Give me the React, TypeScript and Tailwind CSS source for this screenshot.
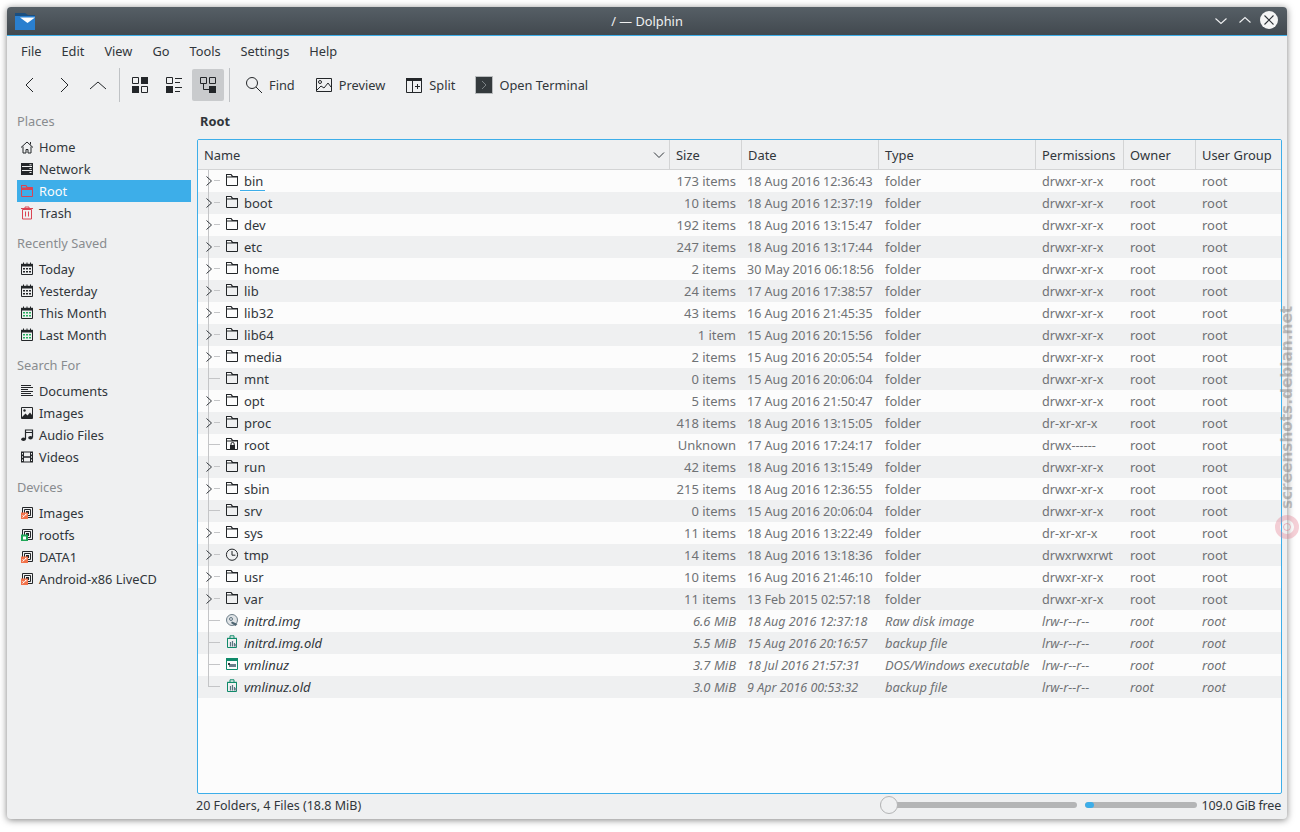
import React from "react";

const D = "#232629";

const Svg = ({ children, className = "", size = 16 }: { children: React.ReactNode; className?: string; size?: number }) => (
  <svg width={size} height={size} viewBox="0 0 16 16" fill="none" className={`shrink-0 ${className}`}>{children}</svg>
);

const Folder = () => (
  <Svg>
    <path d="M2.5 3.5h11v9h-11z" stroke={D} />
    <path d="M2 1h5.4l1.6 2H14v1.4H2z" fill={D} />
    <path d="M3 2h3.8l.9 1.4H3z" fill="#fcfcfc" />
  </Svg>
);
const LockFolder = () => (
  <Svg>
    <path d="M2.5 3.5h11v9h-11z" stroke={D} />
    <path d="M2 1h5.4l1.6 2H14v1.4H2z" fill={D} />
    <path d="M3 2h3.8l.9 1.4H3z" fill="#fcfcfc" />
    <path d="M7 8.5V7a1.6 1.6 0 0 1 3.2 0v1.5" stroke={D} />
    <rect x="6" y="8" width="5" height="4.5" fill={D} />
  </Svg>
);
const Clock = () => (
  <Svg>
    <circle cx="8" cy="7.7" r="5.6" stroke={D} />
    <path d="M8 4V8.2h3.4" stroke={D} />
  </Svg>
);
const DiskImg = () => (
  <Svg>
    <circle cx="8" cy="7" r="5.5" fill="#dfe3e6" stroke="#6e7f8a" />
    <circle cx="7" cy="6" r="1.5" stroke="#5f7480" />
    <path d="M8 8.5l5.5 2.5-2 2-4.5-3z" fill="#4d6470" />
  </Svg>
);
const Backup = () => (
  <Svg>
    <path d="M3.5 3.5h9v9h-9z" stroke="#0f8a6a" />
    <path d="M6 3V.8h4V3" stroke="#0f8a6a" />
    <path d="M3 2.8h10v1H3z" fill="#0f8a6a" />
    <path d="M6.5 7v4.5M8.5 6v5.5M10.5 8v3.5M12 9v2.5" stroke="#5a7480" strokeWidth="1.2" />
  </Svg>
);
const Exec = () => (
  <Svg>
    <path d="M2.5 1.5h11v11h-11z" stroke="#0f8a6a" />
    <path d="M2 1h12v3H2z" fill="#0f8a6a" />
    <path d="M5 7h7v3H5z" fill="#6a7f8a" />
    <path d="M4 6h2v2H4z" fill="#31363b" />
  </Svg>
);
const Home = () => (
  <Svg>
    <path d="M2 8.5 8 3l6 5.5" stroke={D} />
    <path d="M4 7.5V14h3v-3.5h2V14h3V7.5" stroke={D} />
    <path d="M11.5 3v2.5" stroke={D} />
  </Svg>
);
const Network = () => (
  <Svg>
    <path d="M2 2h12v12H2z" fill={D} />
    <path d="M3 5.5h10M3 9.5h10" stroke="#eff0f1" />
    <path d="M10.5 3.8h2M10.5 7.5h2M10.5 11.5h2" stroke="#eff0f1" />
  </Svg>
);
const RootF = () => (
  <Svg>
    <path d="M2.5 4.5h11v9h-11z" stroke="#da4453" />
    <path d="M2 2h5.2l1.6 2.5H14V7H2z" fill="#da4453" />
    <path d="M3 3h3.6l1 1.5H3z" fill="#3daee9" />
  </Svg>
);
const Trash = () => (
  <Svg>
    <path d="M3.5 4.5h9v9.5h-9z" stroke="#da4453" />
    <path d="M2 3.5h12M6 3.5V2h4v1.5M6.5 6.5v5M9.5 6.5v5" stroke="#da4453" />
  </Svg>
);
const Cal = ({ green }: { green?: boolean }) => (
  <Svg>
    <path d="M2.5 4.5h11v9h-11z" stroke={D} />
    <path d="M2 2.8h12v2.7H2z" fill={D} />
    <path d="M4.5 1.5v2M8 1.5v2M11.5 1.5v2" stroke={D} />
    <path d="M4 7h2v1.5H4zM7 7h2v1.5H7zM10 7h2v1.5h-2zM4 10h2v1.5H4zM7 10h2v1.5H7zM10 10h2v1.5h-2z" fill={green ? "#27ae60" : D} />
  </Svg>
);
const Doc = () => (
  <Svg>
    <path d="M2 2.5h10M2 4.5h12M2 6.5h7M2 8.5h12M2 10.5h10M2 12.5h12" stroke={D} />
  </Svg>
);
const Img = () => (
  <Svg>
    <path d="M2.5 2.5h11v11h-11z" stroke={D} />
    <circle cx="5.5" cy="5.5" r="1.2" fill={D} />
    <path d="M3 12l3.5-3.5 2 2L11 7.5l2 2.5v3H3z" fill={D} />
  </Svg>
);
const Audio = () => (
  <Svg>
    <path d="M6.5 12V3h7v7.5M6.5 5.5h7" stroke={D} strokeWidth="1.2" />
    <ellipse cx="4.5" cy="12.3" rx="2.3" ry="1.7" fill={D} />
    <ellipse cx="11.5" cy="10.7" rx="2.3" ry="1.7" fill={D} />
  </Svg>
);
const Video = () => (
  <Svg>
    <path d="M2 2.5h12v11H2z" fill={D} />
    <path d="M5 3.5h6v3.8H5zM5 8.7h6v3.8H5z" fill="#eff0f1" />
    <path d="M3 4h1v1.5H3zM3 7.2h1v1.5H3zM3 10.5h1V12H3zM12 4h1v1.5h-1zM12 7.2h1v1.5h-1zM12 10.5h1V12h-1z" fill="#eff0f1" />
  </Svg>
);
const Drive = ({ green }: { green?: boolean }) => (
  <Svg>
    <path d="M3.5 2.5h10v10h-10z" stroke={D} />
    <path d="M5.5 4.5h6v6h-6z" stroke={D} />
    <path d="M7 6h3v3H7z" fill={D} />
    <path d="M2 7.5h7V14H2z" fill={green ? "#1ea656" : "#f2724a"} />
    {green ? <path d="M4 9.5h3v3H4z" fill="#fff" /> : <path d="M3.5 12.5l4-3.5M3.5 10.5l1.5 1M6 9l1.5 1" stroke="#fff" />}
  </Svg>
);

const ToolIcon = ({ children, active }: { children: React.ReactNode; active?: boolean }) => (
  <div className={`w-8 h-8 flex items-center justify-center rounded-[2px] ${active ? "bg-[#c9cbcd]" : ""}`}>{children}</div>
);

const TextTool = ({ icon, label }: { icon: React.ReactNode; label: string }) => (
  <div className="h-8 px-2 flex items-center gap-[6px]">
    {icon}
    <span className="pt-[2px]">{label}</span>
  </div>
);

const ToolSvg = ({ children }: { children: React.ReactNode }) => (
  <svg width="18" height="18" viewBox="0 0 18 18" fill="none" className="shrink-0">{children}</svg>
);

const places: [string, { label: string; icon: React.ReactNode; active?: boolean }[]][] = [
  ["Places", [
    { label: "Home", icon: <Home /> },
    { label: "Network", icon: <Network /> },
    { label: "Root", icon: <RootF />, active: true },
    { label: "Trash", icon: <Trash /> },
  ]],
  ["Recently Saved", [
    { label: "Today", icon: <Cal /> },
    { label: "Yesterday", icon: <Cal /> },
    { label: "This Month", icon: <Cal green /> },
    { label: "Last Month", icon: <Cal green /> },
  ]],
  ["Search For", [
    { label: "Documents", icon: <Doc /> },
    { label: "Images", icon: <Img /> },
    { label: "Audio Files", icon: <Audio /> },
    { label: "Videos", icon: <Video /> },
  ]],
  ["Devices", [
    { label: "Images", icon: <Drive /> },
    { label: "rootfs", icon: <Drive green /> },
    { label: "DATA1", icon: <Drive /> },
    { label: "Android-x86 LiveCD", icon: <Drive /> },
  ]],
];

type Row = [string, string, string, string, string, boolean, ("f" | "l" | "c" | "d" | "b" | "e")];
const rows: Row[] = [
  ["bin", "173 items", "18 Aug 2016 12:36:43", "folder", "drwxr-xr-x", true, "f"],
  ["boot", "10 items", "18 Aug 2016 12:37:19", "folder", "drwxr-xr-x", true, "f"],
  ["dev", "192 items", "18 Aug 2016 13:15:47", "folder", "drwxr-xr-x", true, "f"],
  ["etc", "247 items", "18 Aug 2016 13:17:44", "folder", "drwxr-xr-x", true, "f"],
  ["home", "2 items", "30 May 2016 06:18:56", "folder", "drwxr-xr-x", true, "f"],
  ["lib", "24 items", "17 Aug 2016 17:38:57", "folder", "drwxr-xr-x", true, "f"],
  ["lib32", "43 items", "16 Aug 2016 21:45:35", "folder", "drwxr-xr-x", true, "f"],
  ["lib64", "1 item", "15 Aug 2016 20:15:56", "folder", "drwxr-xr-x", true, "f"],
  ["media", "2 items", "15 Aug 2016 20:05:54", "folder", "drwxr-xr-x", true, "f"],
  ["mnt", "0 items", "15 Aug 2016 20:06:04", "folder", "drwxr-xr-x", false, "f"],
  ["opt", "5 items", "17 Aug 2016 21:50:47", "folder", "drwxr-xr-x", true, "f"],
  ["proc", "418 items", "18 Aug 2016 13:15:05", "folder", "dr-xr-xr-x", true, "f"],
  ["root", "Unknown", "17 Aug 2016 17:24:17", "folder", "drwx------", false, "l"],
  ["run", "42 items", "18 Aug 2016 13:15:49", "folder", "drwxr-xr-x", true, "f"],
  ["sbin", "215 items", "18 Aug 2016 12:36:55", "folder", "drwxr-xr-x", true, "f"],
  ["srv", "0 items", "15 Aug 2016 20:06:04", "folder", "drwxr-xr-x", false, "f"],
  ["sys", "11 items", "18 Aug 2016 13:22:49", "folder", "dr-xr-xr-x", true, "f"],
  ["tmp", "14 items", "18 Aug 2016 13:18:36", "folder", "drwxrwxrwt", true, "c"],
  ["usr", "10 items", "16 Aug 2016 21:46:10", "folder", "drwxr-xr-x", true, "f"],
  ["var", "11 items", "13 Feb 2015 02:57:18", "folder", "drwxr-xr-x", true, "f"],
  ["initrd.img", "6.6 MiB", "18 Aug 2016 12:37:18", "Raw disk image", "lrw-r--r--", false, "d"],
  ["initrd.img.old", "5.5 MiB", "15 Aug 2016 20:16:57", "backup file", "lrw-r--r--", false, "b"],
  ["vmlinuz", "3.7 MiB", "18 Jul 2016 21:57:31", "DOS/Windows executable", "lrw-r--r--", false, "e"],
  ["vmlinuz.old", "3.0 MiB", "9 Apr 2016 00:53:32", "backup file", "lrw-r--r--", false, "b"],
];

const rowIcon = (k: Row[6]) =>
  k === "f" ? <Folder /> : k === "l" ? <LockFolder /> : k === "c" ? <Clock /> : k === "d" ? <DiskImg /> : k === "b" ? <Backup /> : <Exec />;

const Tree = ({ expandable, last }: { expandable: boolean; last: boolean }) => (
  <svg width="26" height="22" viewBox="0 0 26 22" fill="none" className="shrink-0">
    <path d={last ? "M10.5 0v11" : "M10.5 0v22"} stroke="#c4c5c7" />
    {expandable ? (
      <>
        <path d="M16 10.5h6" stroke="#c4c5c7" />
        <path d="M8.5 6.5l5 4.5-5 4.5" stroke="#31363b" />
      </>
    ) : (
      <path d="M10.5 10.5h11.5" stroke="#c4c5c7" />
    )}
  </svg>
);

const headers: [string, string][] = [
  ["Size", "w-[72px]"],
  ["Date", "w-[137px]"],
  ["Type", "w-[157px]"],
  ["Permissions", "w-[88px]"],
  ["Owner", "w-[72px]"],
  ["User Group", "flex-1"],
];

const cell = "h-[22px] leading-[21px] pt-px whitespace-nowrap text-[#6f7275]";

export default function App() {
  return (
    <div className="relative w-[1300px] h-[832px] bg-white pl-[7px] pt-[7px] overflow-hidden text-[12.8px] text-[#31363b] font-['Noto_Sans',sans-serif]">
      <div className="w-[1280px] h-[812px] flex flex-col bg-[#eff0f1] rounded-[4px] shadow-[0_1px_7px_rgba(0,0,0,0.5)] overflow-hidden">
        {/* Title bar */}
        <div className="relative h-[29px] shrink-0 flex items-center justify-center bg-gradient-to-b from-[#565f66] to-[#42494f] border-b border-[#3daee9] text-[#eff0f1]">
          <span className="pt-[2px]">/ — Dolphin</span>
          <svg width="22" height="18" viewBox="0 0 22 18" className="absolute left-[7px] top-[5px]">
            <path d="M1 1h10l3 2h7v14a1 1 0 0 1-1 1H1z" fill="#1b4f80" />
            <path d="M1 4h20v14H1z" fill="#2a7fcf" />
            <path d="M6 5.5h15L13.5 11z" fill="#fff" />
          </svg>
          <svg width="16" height="16" viewBox="0 0 16 16" fill="none" className="absolute left-[1206px] top-[6px]"><path d="M2.5 5.5 8 10.5l5.5-5" stroke="#eff0f1" strokeWidth="1.1" /></svg>
          <svg width="16" height="16" viewBox="0 0 16 16" fill="none" className="absolute left-[1230px] top-[5px]"><path d="M2.5 10.5 8 5.5l5.5 5" stroke="#eff0f1" strokeWidth="1.1" /></svg>
          <div className="absolute left-[1253px] top-[4px] w-[18px] h-[18px] rounded-full bg-[#f5f5f5] flex items-center justify-center">
            <svg width="12" height="12" viewBox="0 0 12 12" fill="none"><path d="M1.5 1.5l9 9M10.5 1.5l-9 9" stroke="#31363b" strokeWidth="1.1" /></svg>
          </div>
        </div>

        {/* Menu */}
        <div className="h-[30px] shrink-0 flex items-center pl-[14px] pt-[1px] gap-[20px]">
          {["File", "Edit", "View", "Go", "Tools", "Settings", "Help"].map((m) => (
            <span key={m}>{m}</span>
          ))}
        </div>

        {/* Toolbar */}
        <div className="h-[38px] shrink-0 flex items-center pl-[7px] pb-[1px]">
          <div className="flex gap-[2px]">
            <ToolIcon><ToolSvg><path d="M12 2 5 9l7 7" stroke={D} /></ToolSvg></ToolIcon>
            <ToolIcon><ToolSvg><path d="M6 2l7 7-7 7" stroke={D} /></ToolSvg></ToolIcon>
            <ToolIcon><ToolSvg><path d="M1 13l8-7 8 7" stroke={D} /></ToolSvg></ToolIcon>
          </div>
          <div className="w-px h-[34px] bg-[#bfc2c5] ml-[5px] mr-[4px]" />
          <div className="flex gap-[2px]">
            <ToolIcon>
              <ToolSvg>
                <path d="M1.5 1.5h6v6h-6zM10.5 10.5h6v6h-6z" stroke={D} />
                <path d="M10 1h7v7h-7zM1 10h7v7H1z" fill={D} />
              </ToolSvg>
            </ToolIcon>
            <ToolIcon>
              <ToolSvg>
                <path d="M1.5 1.5h6v6h-6z" stroke={D} />
                <path d="M1 10h7v7H1z" fill={D} />
                <path d="M10 2.5h7M10 6.5h5M10 11.5h7M10 15.5h5" stroke={D} />
              </ToolSvg>
            </ToolIcon>
            <ToolIcon active>
              <ToolSvg>
                <path d="M1.5 1.5h6v6h-6zM10.5 1.5h6v6h-6z" stroke={D} />
                <path d="M10 10h7v7h-7z" fill={D} />
                <path d="M4.5 8v5.5H10" stroke={D} />
              </ToolSvg>
            </ToolIcon>
          </div>
          <div className="w-px h-[34px] bg-[#bfc2c5] ml-[5px] mr-[7px]" />
          <div className="flex gap-[4px]">
            <TextTool label="Find" icon={<ToolSvg><circle cx="7" cy="7" r="5.5" stroke={D} /><path d="M11 11l6 6" stroke={D} /></ToolSvg>} />
            <TextTool label="Preview" icon={<ToolSvg><path d="M1.5 2.5h15v13h-15z" stroke={D} /><circle cx="5" cy="6" r="1.5" stroke={D} /><path d="M2 14l4-4 3 2 4-5 3 4" stroke={D} /></ToolSvg>} />
            <TextTool label="Split" icon={<ToolSvg><path d="M1.5 2.5h15v14h-15z" stroke={D} /><path d="M1 2h16v3H1z" fill={D} /><path d="M7.5 5v11M10 10.5h5M12.5 8v5" stroke={D} /></ToolSvg>} />
            <TextTool label="Open Terminal" icon={<svg width="18" height="18" viewBox="0 0 18 18" fill="none" className="shrink-0"><rect x="0.5" y="0.5" width="17" height="17" fill="#343a3d" stroke="#b9bcbe" /><path d="M7 5l4 4-4 4" stroke="#7b8285" /></svg>} />
          </div>
        </div>

        {/* Body */}
        <div className="flex-1 min-h-0 flex">
          {/* Sidebar */}
          <div className="w-[190px] shrink-0 pl-[10px] pt-[6px]">
            {places.map(([title, items], i) => (
              <div key={title} className={i ? "mt-[8px]" : ""}>
                <div className="h-[22px] mb-[4px] flex items-center pt-[2px] text-[#898c8f]">{title}</div>
                {items.map((it) => (
                  <div key={it.label} className={`h-[22px] w-[174px] flex items-center pl-[2px] gap-[4px] ${it.active ? "bg-[#3daee9] text-[#fcfcfc]" : ""}`}>
                    {it.icon}
                    <span className="pt-[2px]">{it.label}</span>
                  </div>
                ))}
              </div>
            ))}
          </div>

          {/* Main */}
          <div className="flex-1 min-w-0 flex flex-col pt-[7px]">
            <div className="h-[22px] flex items-center pl-[3px] font-bold shrink-0">Root</div>
            <div className="h-[655px] w-[1085px] mt-[6px] shrink-0 border border-[#3daee9] rounded-[2px] bg-[#fcfcfc] overflow-hidden text-[13px]">
              <div className="h-[30px] flex items-center bg-[#eff0f1] border-b border-[#d3d4d5] text-[12.9px]">
                <div className="w-[472px] h-full flex items-center justify-between pl-[6px] pr-[4px] border-r border-[#d3d4d5]">
                  <span className="pt-[3px]">Name</span>
                  <svg width="12" height="12" viewBox="0 0 12 12" fill="none"><path d="M1 3.5 6 8.5l5-5" stroke="#31363b" /></svg>
                </div>
                {headers.map(([h, w]) => (
                  <div key={h} className={`${w} h-full flex items-center pl-[6px] ${h === "User Group" ? "" : "border-r border-[#d3d4d5]"}`}><span className="pt-[3px]">{h}</span></div>
                ))}
              </div>
              {rows.map((r, i) => {
                const link = i >= 20;
                return (
                  <div key={r[0]} className={`h-[22px] flex items-start ${i % 2 ? "bg-[#eff0f1]" : "bg-[#fcfcfc]"} ${link ? "italic" : ""}`}>
                    <div className="w-[472px] h-[22px] flex items-center">
                      <Tree expandable={r[5]} last={i === rows.length - 1} />
                      {rowIcon(r[6])}
                      <span className={`self-start h-[21px] pt-px px-1 leading-[21px] ${i === 0 ? "w-[25px] border-b border-[#3daee9]" : ""}`}>{r[0]}</span>
                    </div>
                    <div className={`w-[72px] text-right pr-[6px] ${cell}`}>{r[1]}</div>
                    <div className={`w-[137px] pl-[5px] text-[12.5px] ${cell}`}>{r[2]}</div>
                    <div className={`w-[157px] pl-[6px] text-[12.9px] ${cell}`}>{r[3]}</div>
                    <div className={`w-[88px] pl-[6px] text-[12.6px] ${cell}`}>{r[4]}</div>
                    <div className={`w-[72px] pl-[6px] ${cell}`}>root</div>
                    <div className={`flex-1 pl-[6px] ${cell}`}>root</div>
                  </div>
                );
              })}
            </div>
            <div className="flex-1 flex items-center w-[1085px] pr-[1px] pb-[3px] text-[12.5px]">
              <span className="-ml-[1px] pt-[2px]">20 Folders, 4 Files (18.8 MiB)</span>
              <div className="ml-auto relative w-[197px] h-[6px] rounded-full bg-[#b4b5b6]">
                <div className="absolute left-0 -top-[6px] w-[18px] h-[18px] rounded-full bg-[#eff0f1] border border-[#b4b5b6]" />
              </div>
              <div className="ml-[8px] w-[112px] h-[6px] rounded-full bg-[#b4b5b6] overflow-hidden">
                <div className="w-[9px] h-full rounded-full bg-[#3daee9]" />
              </div>
              <span className="ml-[5px] pt-[2px] tracking-[-0.2px]">109.0 GiB free</span>
            </div>
          </div>
        </div>
      </div>

      {/* Watermark */}
      <div className="absolute left-[1280px] top-[304px] w-[15px] h-[206px] flex items-center justify-center pointer-events-none">
        <span className="rotate-[-90deg] whitespace-nowrap font-['DejaVu_Sans',sans-serif] font-bold text-[15.3px] text-[rgba(130,130,130,0.5)]">screenshots.debian.net</span>
      </div>
      <div className="absolute left-[1275px] top-[515px] w-[24px] h-[24px] rounded-full border-[5px] border-[rgba(225,120,140,0.35)] flex items-center justify-center pointer-events-none">
        <div className="w-[8px] h-[8px] rounded-full border border-[rgba(225,120,140,0.5)]" />
      </div>
    </div>
  );
}
